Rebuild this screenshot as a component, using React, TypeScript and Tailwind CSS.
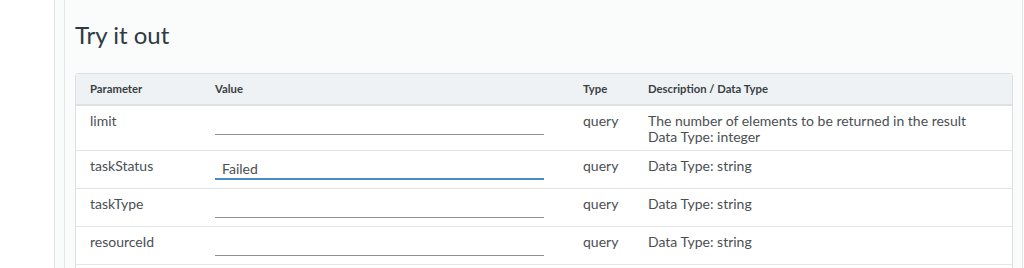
const rows = [
  {
    name: "limit",
    value: "",
    desc: ["The number of elements to be returned in the result", "Data Type: integer"],
  },
  { name: "taskStatus", value: "Failed", desc: ["Data Type: string"], focused: true },
  { name: "taskType", value: "", desc: ["Data Type: string"] },
  { name: "resourceId", value: "", desc: ["Data Type: string"] },
]

export default function App() {
  return (
    <div className="h-[268px] w-[1024px] overflow-hidden bg-white font-['Lato',sans-serif]">
      <div className="ml-[54px] h-full border-l border-[#e3e3e3] bg-[#fafbfb] pl-[9px]">
        <div className="h-full w-[959px] border-x border-[#e6e6e6] pl-[10px] pr-[9px]">
          <h2 className="pt-[20px] text-[24px] leading-[30px] text-[#2e3a44]">Try it out</h2>
          <div className="mt-[23px] rounded-t-[3px] border border-[#dcdfe3] bg-white">
            <div className="grid grid-cols-[125px_368px_65px_1fr] border-b-2 border-[#dde1e5] bg-[#eff2f5] text-[11.3px] font-bold leading-[30px] text-[#3a3f44]">
              <div className="pl-[14px]">Parameter</div>
              <div className="pl-[14px]">Value</div>
              <div className="pl-[14px]">Type</div>
              <div className="pl-[14px]">Description / Data Type</div>
            </div>
            {rows.map((r) => (
              <div
                key={r.name}
                className="grid grid-cols-[125px_368px_65px_1fr] border-b border-[#e4e4e4] text-[14px] leading-[16px] text-[#4a4f54]"
              >
                <div className="pt-[7px] pl-[14px]">{r.name}</div>
                <div className="pl-[14px] pt-[9px] pb-[8px]">
                  <div
                    className={
                      r.focused
                        ? "h-[20px] w-[329px] border-b-2 border-[#4a8cc2] pl-[7px] pt-[1px] text-[14px] leading-[16px] text-[#4a4f54]"
                        : "h-[20px] w-[329px] border-b border-[#8c9196]"
                    }
                  >
                    {r.value}
                  </div>
                </div>
                <div className="pt-[7px] pl-[14px]">query</div>
                <div className="pt-[7px] pb-[5px] pl-[14px]">
                  {r.desc.map((d) => (
                    <div key={d}>{d}</div>
                  ))}
                </div>
              </div>
            ))}
            <div className="h-[37px]" />
          </div>
        </div>
      </div>
    </div>
  )
}
